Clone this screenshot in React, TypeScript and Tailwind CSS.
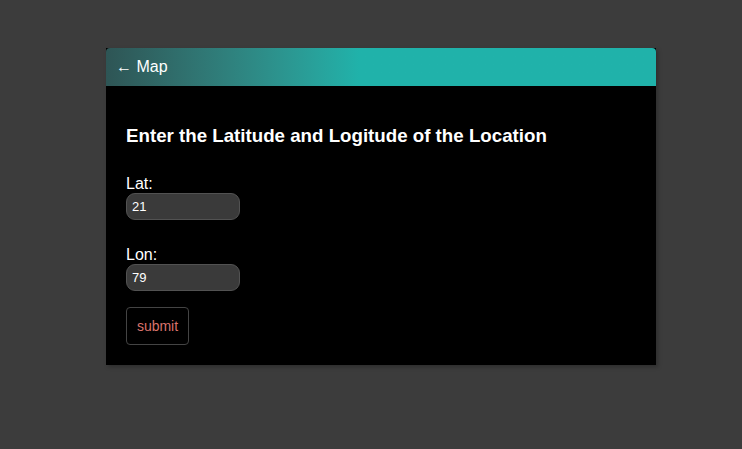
export default function App() {
  return (
    <main className="min-h-screen bg-[#3c3c3c] pt-[48px] pl-[106px] font-['Liberation_Sans',Arial,sans-serif]">
      <div className="w-[550px] bg-black shadow-[2px_2px_4px_rgba(0,0,0,0.25)]">
        <header className="h-[38px] rounded-t-[4px] bg-linear-to-r from-[#2e5555] to-[#20b2aa] to-[46%] flex items-center pl-[10px] pr-[11px]">
          <a className="text-white text-base">← Map</a>
        </header>

        <section className="px-5 pt-[39px] pb-5">
          <h3 className="text-white text-[18.72px] leading-[22px] font-bold">
            Enter the Latitude and Logitude of the Location
          </h3>

          <form className="flex flex-col items-start">
            <label className="mt-[28px] text-white text-base leading-[18px]">Lat:</label>
            <input
              className="w-[114px] h-[27px] rounded-[9px] bg-[#3a3a3a] border border-[#525252] px-[5px] text-[13px] text-white outline-none"
              defaultValue="21"
            />

            <label className="mt-[26px] text-white text-base leading-[18px]">Lon:</label>
            <input
              className="w-[114px] h-[27px] rounded-[9px] bg-[#3a3a3a] border border-[#525252] px-[5px] text-[13px] text-white outline-none"
              defaultValue="79"
            />

            <button
              type="button"
              className="mt-4 h-[38px] w-[63px] rounded-[4px] border border-[#444] text-[14px] text-[#d9736c]"
            >
              submit
            </button>
          </form>
        </section>
      </div>
    </main>
  );
}
